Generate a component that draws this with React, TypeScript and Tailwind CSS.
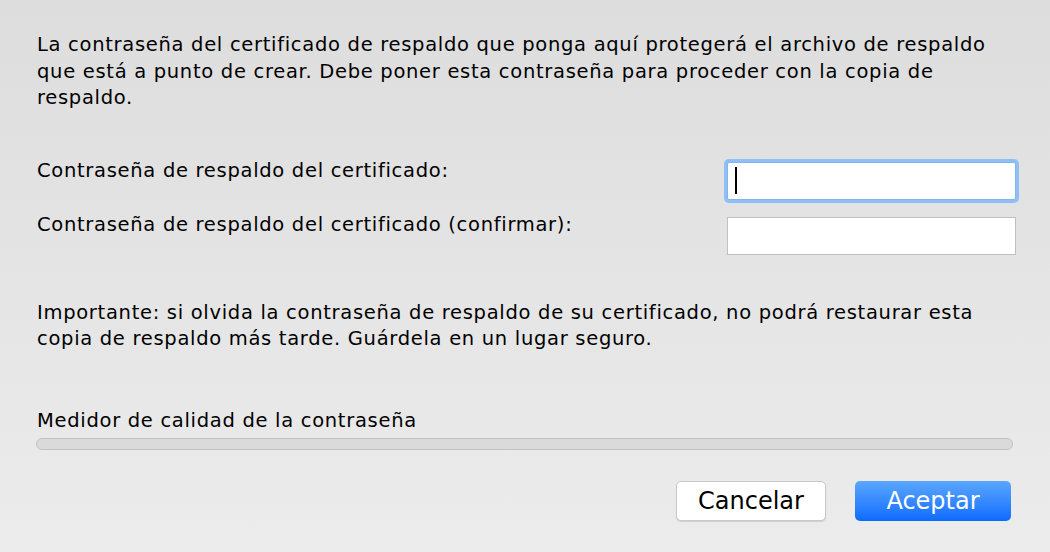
export default function App() {
  return (
    <div
      className="w-[1050px] h-[552px] bg-gradient-to-b from-[#dddddd] to-[#ececec] text-black overflow-hidden"
      style={{ fontFamily: '"DejaVu Sans", "Liberation Sans", sans-serif' }}
    >
      <div className="pl-[37px] pr-[34px] pt-[32px] text-[19.5px] tracking-[0.7px]">
        <p className="leading-[26.5px] whitespace-nowrap">
          La contraseña del certificado de respaldo que ponga aquí protegerá el archivo de respaldo
          <br />
          que está a punto de crear. Debe poner esta contraseña para proceder con la copia de
          <br />
          respaldo.
        </p>

        <div className="mt-[50px] flex flex-col gap-[17px]">
          <div className="flex items-start justify-between">
            <span className="leading-[26px] mt-[-4px]">Contraseña de respaldo del certificado:</span>
            <div className="relative w-[289px] h-[38px] bg-white border border-[#84b4ea] ring-[3px] ring-[#8fc0f5] rounded-[2px]">
              <div className="absolute left-[7px] top-[4px] w-[2px] h-[27px] bg-black" />
            </div>
          </div>
          <div className="flex items-start justify-between">
            <span className="leading-[26px] mt-[-5px]">Contraseña de respaldo del certificado (confirmar):</span>
            <div className="w-[289px] h-[38px] bg-white border border-[#c0c0c0]" />
          </div>
        </div>

        <p className="mt-[45px] leading-[26.5px] whitespace-nowrap">
          Importante: si olvida la contraseña de respaldo de su certificado, no podrá restaurar esta
          <br />
          copia de respaldo más tarde. Guárdela en un lugar seguro.
        </p>

        <div className="mt-[55px]">
          <div className="leading-[26px]">Medidor de calidad de la contraseña</div>
          <div className="mt-[4px] ml-[-1px] w-[977px] h-[12px] rounded-full bg-[#dadada] border border-[#c2c2c2]" />
        </div>

        <div className="mt-[31px] flex justify-end gap-[29px] pr-[5px] tracking-normal">
          <button className="w-[150px] h-[40px] rounded-[5px] bg-white border border-[#c8c8c8] shadow-[0_1px_1px_rgba(0,0,0,0.12)] text-[24px] text-black">
            Cancelar
          </button>
          <button className="w-[156px] h-[40px] rounded-[5px] bg-gradient-to-b from-[#5aa6ff] to-[#0a6bff] text-[24px] text-white">
            Aceptar
          </button>
        </div>
      </div>
    </div>
  )
}
